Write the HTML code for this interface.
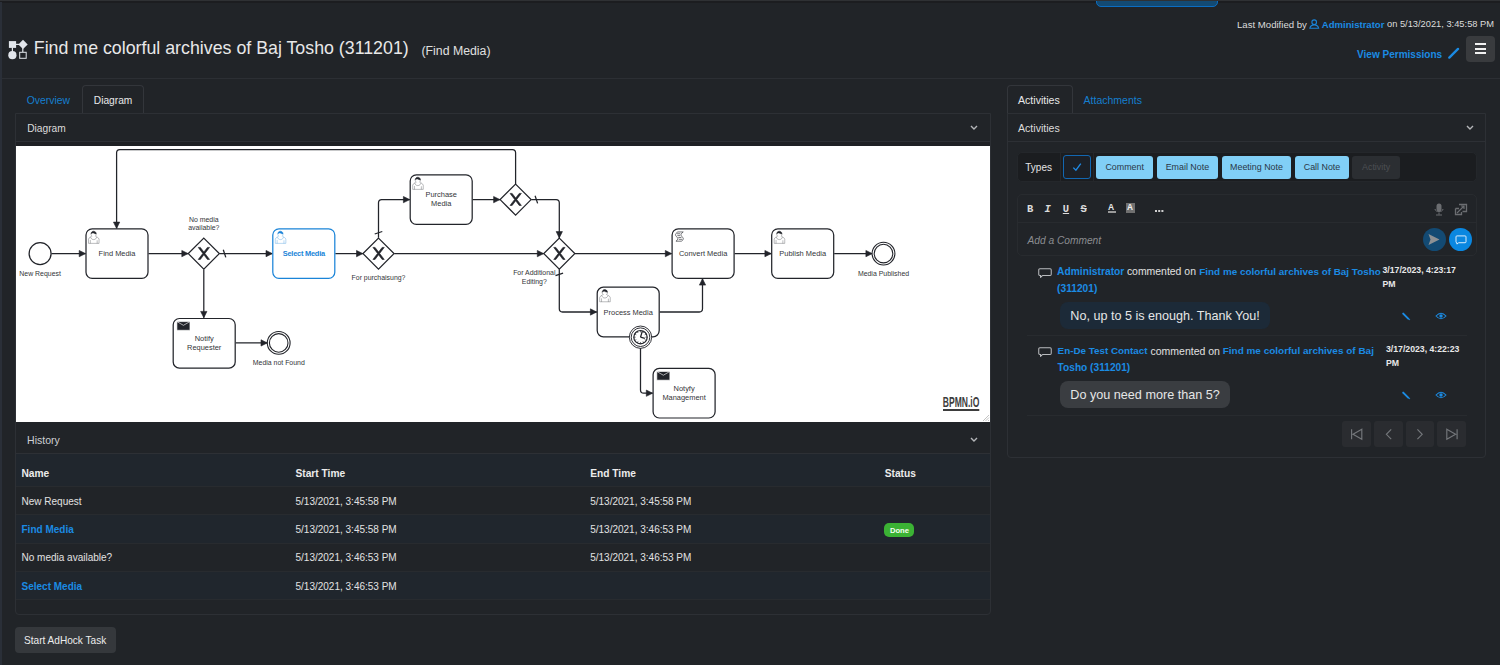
<!DOCTYPE html>
<html><head><meta charset="utf-8">
<style>
*{box-sizing:border-box;margin:0;padding:0}
html,body{width:1500px;height:665px;overflow:hidden;background:#212428;font-family:"Liberation Sans",sans-serif;color:#e4e4e4}
.a{position:absolute;white-space:nowrap;line-height:1}
.a.lnk{color:#1b8be3}
#topline{left:0;top:0;width:1500px;height:1px;background:#2f3134}
#topline2{left:0;top:1px;width:1500px;height:1.5px;background:#1c1d20}
#leftline{left:0;top:2px;width:2px;height:663px;background:#2a2f38}
#topbtn{left:1095.8px;top:-4px;width:122.4px;height:11px;background:#134a73;border:1px solid #0b6dc2;border-radius:0 0 5px 5px}
#hsep{left:2px;top:78px;width:1498px;height:1px;background:#2c2f34}
.tab{top:85px;height:29px;border:1px solid #33363b;border-bottom:none;border-radius:4px 4px 0 0}
.panel{border:1px solid #2d3035;border-radius:0 0 4px 4px}
.phead{font-size:11px;color:#dcdcdc}
.th{font-size:10.2px;font-weight:bold;color:#ececec}
.td{font-size:10px;color:#e2e2e2}
.tb{top:156px;height:22.5px;background:#81cff6;border-radius:3px;color:#2a3746;font-size:8.9px;text-align:center}
.tb span{position:relative;top:6.8px}
.pg{top:421px;width:28.7px;height:25.8px;background:#2a2c30;border-radius:3px}

</style></head><body>
<div class="a" id="topline2"></div>
<div class="a" id="topbtn"></div>
<div class="a" id="topline"></div>
<div class="a" id="leftline"></div>

<!-- title icon -->
<svg class="a" style="left:0;top:30px" width="40" height="40" viewBox="0 30 40 40">
 <g fill="#e2e6ec" stroke="#e2e6ec">
  <rect x="8.9" y="41.1" width="7.2" height="6.8" stroke="none"/>
  <path d="M23 39.7 L27.7 44.4 L23 49.1 L18.3 44.4Z" stroke="none"/>
  <line x1="16" y1="44.4" x2="19" y2="44.4" stroke-width="1.2"/>
  <line x1="12.4" y1="47.5" x2="12.4" y2="52" stroke-width="1.2"/>
  <circle cx="12.4" cy="55.2" r="4.1" stroke="none"/>
  <line x1="22.8" y1="48" x2="22.8" y2="52" stroke-width="1.2"/>
  <rect x="19.7" y="52.3" width="6.5" height="6" fill="none" stroke-width="1"/>
 </g>
</svg>
<div class="a" style="left:33.8px;top:40.3px;font-size:17.8px;color:#e8e8e8">Find me colorful archives of Baj Tosho (311201)</div>
<div class="a" style="left:421.5px;top:44.6px;font-size:12.3px;color:#e0e0e0">(Find Media)</div>

<!-- right header -->
<div class="a" style="left:1237px;top:19.7px;font-size:9.6px;color:#dcdcdc">Last Modified by</div>
<svg class="a" style="left:1309px;top:18.5px" width="11" height="11" viewBox="0 0 11 11"><circle cx="5.2" cy="3.2" r="2.3" fill="none" stroke="#1b84d8" stroke-width="1.1"/><path d="M0.9 9.2 C1.4 6.8 3 5.9 5.2 5.9 C7.4 5.9 9 6.8 9.6 9.2Z" fill="none" stroke="#1b84d8" stroke-width="1.1"/></svg>
<div class="a lnk" style="left:1321.8px;top:19.7px;font-size:9.55px;font-weight:bold">Administrator</div>
<div class="a" style="left:1387px;top:19.7px;font-size:9.3px;color:#dcdcdc">on 5/13/2021, 3:45:58 PM</div>
<div class="a lnk" style="left:1357px;top:50.4px;font-size:10.04px;font-weight:bold">View Permissions</div>
<svg class="a" style="left:1447px;top:47px" width="13" height="12" viewBox="0 0 13 12"><path d="M2.3 10.6 L11 1.9" stroke="#1b8be3" stroke-width="2.3" stroke-linecap="round"/></svg>
<div class="a" style="left:1466px;top:36px;width:29px;height:26px;background:#393b3e;border-radius:4px"></div>
<div class="a" style="left:1474.5px;top:43.4px;width:11.5px;height:2.1px;background:#f2f2f2"></div>
<div class="a" style="left:1474.5px;top:47.7px;width:11.5px;height:2.1px;background:#f2f2f2"></div>
<div class="a" style="left:1474.5px;top:52px;width:11.5px;height:2.1px;background:#f2f2f2"></div>

<div class="a" id="hsep"></div>

<!-- LEFT COLUMN -->
<div class="a lnk" style="left:26.7px;top:95.8px;font-size:10.4px;color:#157fcf">Overview</div>
<div class="a tab" style="left:82px;width:62px"></div>
<div class="a" style="left:93.8px;top:95.5px;font-size:10.2px;color:#e8e8e8">Diagram</div>

<div class="a panel" style="left:15px;top:113px;width:976px;height:502px"></div>
<div class="a phead" style="left:27.2px;top:124.2px;font-size:10.2px">Diagram</div>
<svg class="a" style="left:969.8px;top:125px" width="8" height="6" viewBox="0 0 8 6"><path d="M1 1 L4 4 L7 1" fill="none" stroke="#b4b6b9" stroke-width="1.4"/></svg>
<div class="a" style="left:16px;top:141px;width:974px;height:1px;background:#2d3035"></div>
<div class="a" style="left:16px;top:142px;width:974px;height:4px;background:#1e2024"></div>
<div class="a" id="diagram" style="left:16px;top:146px;width:974px;height:276px;background:#fff"></div>
<svg class="a" id="bpmn" style="left:16px;top:146px" width="974" height="276" viewBox="16 146 974 276" font-family="Liberation Sans, sans-serif"><path d="M51.4,253.6 L85.5,253.6" fill="none" stroke="#22242a" stroke-width="1.26"/>
<polygon points="85.5,253.6 79.2,250.45 79.2,256.75" fill="#22242a" stroke="#22242a" stroke-width="0.6" stroke-linejoin="round"/>
<path d="M148.5,253.6 L188.1,253.6" fill="none" stroke="#22242a" stroke-width="1.26"/>
<polygon points="188.1,253.6 181.79999999999998,250.45 181.79999999999998,256.75" fill="#22242a" stroke="#22242a" stroke-width="0.6" stroke-linejoin="round"/>
<path d="M219.5,253.6 L272.3,253.6" fill="none" stroke="#22242a" stroke-width="1.26"/>
<polygon points="272.3,253.6 266.0,250.45 266.0,256.75" fill="#22242a" stroke="#22242a" stroke-width="0.6" stroke-linejoin="round"/>
<line x1="223.28" y1="249.82" x2="225.80" y2="257.38" stroke="#22242a" stroke-width="1.26"/>
<path d="M203.8,269.4 L203.8,317.7" fill="none" stroke="#22242a" stroke-width="1.26"/>
<polygon points="203.8,317.7 200.65,311.4 206.95000000000002,311.4" fill="#22242a" stroke="#22242a" stroke-width="0.6" stroke-linejoin="round"/>
<path d="M235.7,342.9 L267.3,342.9" fill="none" stroke="#22242a" stroke-width="1.26"/>
<polygon points="267.3,342.9 261.0,339.75 261.0,346.04999999999995" fill="#22242a" stroke="#22242a" stroke-width="0.6" stroke-linejoin="round"/>
<path d="M335.3,253.6 L362.8,253.6" fill="none" stroke="#22242a" stroke-width="1.26"/>
<polygon points="362.8,253.6 356.5,250.45 356.5,256.75" fill="#22242a" stroke="#22242a" stroke-width="0.6" stroke-linejoin="round"/>
<path d="M378.5,237.8 L378.50,202.80 Q378.5,199.6 381.70,199.60 L409.7,199.6" fill="none" stroke="#22242a" stroke-width="1.26"/>
<polygon points="409.7,199.6 403.4,196.45 403.4,202.75" fill="#22242a" stroke="#22242a" stroke-width="0.6" stroke-linejoin="round"/>
<line x1="374.72" y1="234.02" x2="382.28" y2="231.50" stroke="#22242a" stroke-width="1.26"/>
<path d="M472.7,199.6 L499.9,199.6" fill="none" stroke="#22242a" stroke-width="1.26"/>
<polygon points="499.9,199.6 493.59999999999997,196.45 493.59999999999997,202.75" fill="#22242a" stroke="#22242a" stroke-width="0.6" stroke-linejoin="round"/>
<path d="M515.6,183.9 L515.60,152.80 Q515.6,149.6 512.40,149.60 L119.80,149.60 Q116.6,149.6 116.60,152.80 L116.6,228.4" fill="none" stroke="#22242a" stroke-width="1.26"/>
<polygon points="116.6,228.4 113.44999999999999,222.1 119.75,222.1" fill="#22242a" stroke="#22242a" stroke-width="0.6" stroke-linejoin="round"/>
<path d="M531.3,199.6 L556.10,199.60 Q559.3,199.6 559.30,202.80 L559.3,237.9" fill="none" stroke="#22242a" stroke-width="1.26"/>
<polygon points="559.3,237.9 556.15,231.6 562.4499999999999,231.6" fill="#22242a" stroke="#22242a" stroke-width="0.6" stroke-linejoin="round"/>
<line x1="535.08" y1="195.82" x2="537.60" y2="203.38" stroke="#22242a" stroke-width="1.26"/>
<path d="M394.2,253.6 L543.6,253.6" fill="none" stroke="#22242a" stroke-width="1.26"/>
<polygon points="543.6,253.6 537.3000000000001,250.45 537.3000000000001,256.75" fill="#22242a" stroke="#22242a" stroke-width="0.6" stroke-linejoin="round"/>
<path d="M575,253.6 L671.6,253.6" fill="none" stroke="#22242a" stroke-width="1.26"/>
<polygon points="671.6,253.6 665.3000000000001,250.45 665.3000000000001,256.75" fill="#22242a" stroke="#22242a" stroke-width="0.6" stroke-linejoin="round"/>
<path d="M559.3,269.3 L559.30,308.80 Q559.3,312 562.50,312.00 L596.7,312" fill="none" stroke="#22242a" stroke-width="1.26"/>
<polygon points="596.7,312 590.4000000000001,308.85 590.4000000000001,315.15" fill="#22242a" stroke="#22242a" stroke-width="0.6" stroke-linejoin="round"/>
<line x1="563.08" y1="273.08" x2="555.52" y2="275.60" stroke="#22242a" stroke-width="1.26"/>
<path d="M659.7,312 L699.30,312.00 Q702.5,312 702.50,308.80 L702.5,278.8" fill="none" stroke="#22242a" stroke-width="1.26"/>
<polygon points="702.5,278.8 699.35,285.1 705.65,285.1" fill="#22242a" stroke="#22242a" stroke-width="0.6" stroke-linejoin="round"/>
<path d="M640.5,348.1 L640.50,390.00 Q640.5,393.2 643.70,393.20 L652.6,393.2" fill="none" stroke="#22242a" stroke-width="1.26"/>
<polygon points="652.6,393.2 646.3000000000001,390.05 646.3000000000001,396.34999999999997" fill="#22242a" stroke="#22242a" stroke-width="0.6" stroke-linejoin="round"/>
<path d="M734.6,253.6 L771.2,253.6" fill="none" stroke="#22242a" stroke-width="1.26"/>
<polygon points="771.2,253.6 764.9000000000001,250.45 764.9000000000001,256.75" fill="#22242a" stroke="#22242a" stroke-width="0.6" stroke-linejoin="round"/>
<path d="M834.2,253.6 L872.2,253.6" fill="none" stroke="#22242a" stroke-width="1.26"/>
<polygon points="872.2,253.6 865.9000000000001,250.45 865.9000000000001,256.75" fill="#22242a" stroke="#22242a" stroke-width="0.6" stroke-linejoin="round"/>
<circle cx="40.1" cy="253.6" r="10.96" fill="#fff" stroke="#22242a" stroke-width="1.3"/>
<g transform="translate(86.00,228.80) scale(0.62)"><rect x="0" y="0" width="100" height="80" rx="10" ry="10" fill="#fff" stroke="#22242a" stroke-width="2"/><path d="m 15,12 c 0.909,-0.845 1.594,-2.049 1.594,-3.385 0,-2.554 -1.805,-4.62199999 -4.357,-4.62199999 -2.55199998,0 -4.28799998,2.06799999 -4.28799998,4.62199999 0,1.348 0.974,2.562 1.89599999,3.405 -0.52899998,0.187 -5.669,2.097 -5.794,4.7560005 v 6.718 h 17 v -6.718 c 0,-2.2980005 -5.5279996,-4.5950005 -6.0169996,-4.7760005 z m -8,6 l 0,5.5 m 11,0 l 0,-5" fill="#fff" stroke="#22242a" stroke-width="0.5"/><path d="m 15,12 m 2.162,1.009 c 0,2.4470005 -2.158,4.4310005 -4.821,4.4310005 -2.66499998,0 -4.822,-1.981 -4.822,-4.4310005" fill="#fff" stroke="#22242a" stroke-width="0.5"/><path d="m 15,12 m -6.9,-3.80 c 0,0 2.25099998,-2.358 4.27399998,-1.177 2.024,1.181 4.221,1.537 4.124,0.965 -0.098,-0.57 -0.117,-3.79099999 -4.191,-4.13599999 -3.57499998,0.001 -4.20799998,3.36699999 -4.20699998,4.34799999 z" fill="#22242a" stroke="#22242a" stroke-width="0.5"/><text x="50" y="40.0" dy="0.35em" text-anchor="middle" font-size="12" font-weight="normal" fill="#333539">Find Media</text></g>
<g transform="translate(188.30,238.10) scale(0.62)"><polygon points="25,0 50,25 25,50 0,25" fill="#fff" stroke="#22242a" stroke-width="2"/><path d="M16,15 l7.43,9.71 l-7.43,9.71 l3.43,0 l5.71,-7.464 l5.71,7.464 l3.43,0 l-7.43,-9.71 l7.43,-9.71 l-3.43,0 l-5.71,7.464 l-5.71,-7.464 z" fill="#22242a" stroke="#22242a" stroke-width="1"/></g>
<g transform="translate(272.80,228.80) scale(0.62)"><rect x="0" y="0" width="100" height="80" rx="10" ry="10" fill="#fff" stroke="#1a84d8" stroke-width="2"/><path d="m 15,12 c 0.909,-0.845 1.594,-2.049 1.594,-3.385 0,-2.554 -1.805,-4.62199999 -4.357,-4.62199999 -2.55199998,0 -4.28799998,2.06799999 -4.28799998,4.62199999 0,1.348 0.974,2.562 1.89599999,3.405 -0.52899998,0.187 -5.669,2.097 -5.794,4.7560005 v 6.718 h 17 v -6.718 c 0,-2.2980005 -5.5279996,-4.5950005 -6.0169996,-4.7760005 z m -8,6 l 0,5.5 m 11,0 l 0,-5" fill="#fff" stroke="#1a84d8" stroke-width="0.5"/><path d="m 15,12 m 2.162,1.009 c 0,2.4470005 -2.158,4.4310005 -4.821,4.4310005 -2.66499998,0 -4.822,-1.981 -4.822,-4.4310005" fill="#fff" stroke="#1a84d8" stroke-width="0.5"/><path d="m 15,12 m -6.9,-3.80 c 0,0 2.25099998,-2.358 4.27399998,-1.177 2.024,1.181 4.221,1.537 4.124,0.965 -0.098,-0.57 -0.117,-3.79099999 -4.191,-4.13599999 -3.57499998,0.001 -4.20799998,3.36699999 -4.20699998,4.34799999 z" fill="#1a84d8" stroke="#1a84d8" stroke-width="0.5"/><text x="50" y="40.0" dy="0.35em" text-anchor="middle" font-size="12" font-weight="bold" fill="#1a84d8" letter-spacing="-0.4">Select Media</text></g>
<g transform="translate(173.20,318.50) scale(0.62)"><rect x="0" y="0" width="100" height="80" rx="10" ry="10" fill="#fff" stroke="#22242a" stroke-width="2"/><path d="M 6,5 l 0,14 l 21,0 l 0,-14 z" fill="#22242a" stroke="#fff" stroke-width="1"/><path d="M 6,5 l 10.5,6 l 10.5,-6" fill="none" stroke="#fff" stroke-width="1"/><text x="50" y="31.75" dy="0.35em" text-anchor="middle" font-size="12" font-weight="normal" fill="#333539">Notify</text><text x="50" y="46.25" dy="0.35em" text-anchor="middle" font-size="12" font-weight="normal" fill="#333539">Requester</text></g>
<circle cx="278.7" cy="342.9" r="11.4" fill="#fff" stroke="#22242a" stroke-width="1.1"/>
<circle cx="278.7" cy="342.9" r="9.3" fill="none" stroke="#22242a" stroke-width="1.1"/>
<g transform="translate(363.00,238.10) scale(0.62)"><polygon points="25,0 50,25 25,50 0,25" fill="#fff" stroke="#22242a" stroke-width="2"/><path d="M16,15 l7.43,9.71 l-7.43,9.71 l3.43,0 l5.71,-7.464 l5.71,7.464 l3.43,0 l-7.43,-9.71 l7.43,-9.71 l-3.43,0 l-5.71,7.464 l-5.71,-7.464 z" fill="#22242a" stroke="#22242a" stroke-width="1"/></g>
<g transform="translate(410.20,174.80) scale(0.62)"><rect x="0" y="0" width="100" height="80" rx="10" ry="10" fill="#fff" stroke="#22242a" stroke-width="2"/><path d="m 15,12 c 0.909,-0.845 1.594,-2.049 1.594,-3.385 0,-2.554 -1.805,-4.62199999 -4.357,-4.62199999 -2.55199998,0 -4.28799998,2.06799999 -4.28799998,4.62199999 0,1.348 0.974,2.562 1.89599999,3.405 -0.52899998,0.187 -5.669,2.097 -5.794,4.7560005 v 6.718 h 17 v -6.718 c 0,-2.2980005 -5.5279996,-4.5950005 -6.0169996,-4.7760005 z m -8,6 l 0,5.5 m 11,0 l 0,-5" fill="#fff" stroke="#22242a" stroke-width="0.5"/><path d="m 15,12 m 2.162,1.009 c 0,2.4470005 -2.158,4.4310005 -4.821,4.4310005 -2.66499998,0 -4.822,-1.981 -4.822,-4.4310005" fill="#fff" stroke="#22242a" stroke-width="0.5"/><path d="m 15,12 m -6.9,-3.80 c 0,0 2.25099998,-2.358 4.27399998,-1.177 2.024,1.181 4.221,1.537 4.124,0.965 -0.098,-0.57 -0.117,-3.79099999 -4.191,-4.13599999 -3.57499998,0.001 -4.20799998,3.36699999 -4.20699998,4.34799999 z" fill="#22242a" stroke="#22242a" stroke-width="0.5"/><text x="50" y="31.75" dy="0.35em" text-anchor="middle" font-size="12" font-weight="normal" fill="#333539">Purchase</text><text x="50" y="46.25" dy="0.35em" text-anchor="middle" font-size="12" font-weight="normal" fill="#333539">Media</text></g>
<g transform="translate(500.10,184.10) scale(0.62)"><polygon points="25,0 50,25 25,50 0,25" fill="#fff" stroke="#22242a" stroke-width="2"/><path d="M16,15 l7.43,9.71 l-7.43,9.71 l3.43,0 l5.71,-7.464 l5.71,7.464 l3.43,0 l-7.43,-9.71 l7.43,-9.71 l-3.43,0 l-5.71,7.464 l-5.71,-7.464 z" fill="#22242a" stroke="#22242a" stroke-width="1"/></g>
<g transform="translate(543.80,238.10) scale(0.62)"><polygon points="25,0 50,25 25,50 0,25" fill="#fff" stroke="#22242a" stroke-width="2"/><path d="M16,15 l7.43,9.71 l-7.43,9.71 l3.43,0 l5.71,-7.464 l5.71,7.464 l3.43,0 l-7.43,-9.71 l7.43,-9.71 l-3.43,0 l-5.71,7.464 l-5.71,-7.464 z" fill="#22242a" stroke="#22242a" stroke-width="1"/></g>
<g transform="translate(672.10,228.80) scale(0.62)"><rect x="0" y="0" width="100" height="80" rx="10" ry="10" fill="#fff" stroke="#22242a" stroke-width="2"/><path d="m 15,20 c 9.966553,-6.27276 -8.000926,-7.91932 2.968968,-14.938 l -8.802728,0 c -10.969894,7.01868 6.997585,8.66524 -2.968967,14.938 z m -7,-12 l 5,0 m -4.5,3 l 4.5,0 m -3,3 l 5,0 m -4,3 l 5,0" fill="#fff" stroke="#22242a" stroke-width="1"/><text x="50" y="40.0" dy="0.35em" text-anchor="middle" font-size="12" font-weight="normal" fill="#333539">Convert Media</text></g>
<g transform="translate(597.20,287.20) scale(0.62)"><rect x="0" y="0" width="100" height="80" rx="10" ry="10" fill="#fff" stroke="#22242a" stroke-width="2"/><path d="m 15,12 c 0.909,-0.845 1.594,-2.049 1.594,-3.385 0,-2.554 -1.805,-4.62199999 -4.357,-4.62199999 -2.55199998,0 -4.28799998,2.06799999 -4.28799998,4.62199999 0,1.348 0.974,2.562 1.89599999,3.405 -0.52899998,0.187 -5.669,2.097 -5.794,4.7560005 v 6.718 h 17 v -6.718 c 0,-2.2980005 -5.5279996,-4.5950005 -6.0169996,-4.7760005 z m -8,6 l 0,5.5 m 11,0 l 0,-5" fill="#fff" stroke="#22242a" stroke-width="0.5"/><path d="m 15,12 m 2.162,1.009 c 0,2.4470005 -2.158,4.4310005 -4.821,4.4310005 -2.66499998,0 -4.822,-1.981 -4.822,-4.4310005" fill="#fff" stroke="#22242a" stroke-width="0.5"/><path d="m 15,12 m -6.9,-3.80 c 0,0 2.25099998,-2.358 4.27399998,-1.177 2.024,1.181 4.221,1.537 4.124,0.965 -0.098,-0.57 -0.117,-3.79099999 -4.191,-4.13599999 -3.57499998,0.001 -4.20799998,3.36699999 -4.20699998,4.34799999 z" fill="#22242a" stroke="#22242a" stroke-width="0.5"/><text x="50" y="40.0" dy="0.35em" text-anchor="middle" font-size="12" font-weight="normal" fill="#333539">Process Media</text></g>
<g transform="translate(653.10,368.40) scale(0.62)"><rect x="0" y="0" width="100" height="80" rx="10" ry="10" fill="#fff" stroke="#22242a" stroke-width="2"/><path d="M 6,5 l 0,14 l 21,0 l 0,-14 z" fill="#22242a" stroke="#fff" stroke-width="1"/><path d="M 6,5 l 10.5,6 l 10.5,-6" fill="none" stroke="#fff" stroke-width="1"/><text x="50" y="31.75" dy="0.35em" text-anchor="middle" font-size="12" font-weight="normal" fill="#333539">Notyfy</text><text x="50" y="46.25" dy="0.35em" text-anchor="middle" font-size="12" font-weight="normal" fill="#333539">Management</text></g>
<g transform="translate(771.70,228.80) scale(0.62)"><rect x="0" y="0" width="100" height="80" rx="10" ry="10" fill="#fff" stroke="#22242a" stroke-width="2"/><path d="m 15,12 c 0.909,-0.845 1.594,-2.049 1.594,-3.385 0,-2.554 -1.805,-4.62199999 -4.357,-4.62199999 -2.55199998,0 -4.28799998,2.06799999 -4.28799998,4.62199999 0,1.348 0.974,2.562 1.89599999,3.405 -0.52899998,0.187 -5.669,2.097 -5.794,4.7560005 v 6.718 h 17 v -6.718 c 0,-2.2980005 -5.5279996,-4.5950005 -6.0169996,-4.7760005 z m -8,6 l 0,5.5 m 11,0 l 0,-5" fill="#fff" stroke="#22242a" stroke-width="0.5"/><path d="m 15,12 m 2.162,1.009 c 0,2.4470005 -2.158,4.4310005 -4.821,4.4310005 -2.66499998,0 -4.822,-1.981 -4.822,-4.4310005" fill="#fff" stroke="#22242a" stroke-width="0.5"/><path d="m 15,12 m -6.9,-3.80 c 0,0 2.25099998,-2.358 4.27399998,-1.177 2.024,1.181 4.221,1.537 4.124,0.965 -0.098,-0.57 -0.117,-3.79099999 -4.191,-4.13599999 -3.57499998,0.001 -4.20799998,3.36699999 -4.20699998,4.34799999 z" fill="#22242a" stroke="#22242a" stroke-width="0.5"/><text x="50" y="40.0" dy="0.35em" text-anchor="middle" font-size="12" font-weight="normal" fill="#333539">Publish Media</text></g>
<circle cx="883.5" cy="253.6" r="11.4" fill="#fff" stroke="#22242a" stroke-width="1.1"/>
<circle cx="883.5" cy="253.6" r="9.3" fill="none" stroke="#22242a" stroke-width="1.1"/>
<g transform="translate(629.34,326.04) scale(0.62)"><circle cx="18" cy="18" r="18" fill="#fff" stroke="#22242a" stroke-width="1.5"/><circle cx="18" cy="18" r="15" fill="#fff" stroke="#22242a" stroke-width="1.5"/><circle cx="18" cy="18" r="10.8" fill="#fff" stroke="#22242a" stroke-width="2"/><path d="M 18,18 m 0,-10.8 l 0,3" transform="rotate(0 18 18)" stroke="#22242a" stroke-width="1"/><path d="M 18,18 m 0,-10.8 l 0,3" transform="rotate(30 18 18)" stroke="#22242a" stroke-width="1"/><path d="M 18,18 m 0,-10.8 l 0,3" transform="rotate(60 18 18)" stroke="#22242a" stroke-width="1"/><path d="M 18,18 m 0,-10.8 l 0,3" transform="rotate(90 18 18)" stroke="#22242a" stroke-width="1"/><path d="M 18,18 m 0,-10.8 l 0,3" transform="rotate(120 18 18)" stroke="#22242a" stroke-width="1"/><path d="M 18,18 m 0,-10.8 l 0,3" transform="rotate(150 18 18)" stroke="#22242a" stroke-width="1"/><path d="M 18,18 m 0,-10.8 l 0,3" transform="rotate(180 18 18)" stroke="#22242a" stroke-width="1"/><path d="M 18,18 m 0,-10.8 l 0,3" transform="rotate(210 18 18)" stroke="#22242a" stroke-width="1"/><path d="M 18,18 m 0,-10.8 l 0,3" transform="rotate(240 18 18)" stroke="#22242a" stroke-width="1"/><path d="M 18,18 m 0,-10.8 l 0,3" transform="rotate(270 18 18)" stroke="#22242a" stroke-width="1"/><path d="M 18,18 m 0,-10.8 l 0,3" transform="rotate(300 18 18)" stroke="#22242a" stroke-width="1"/><path d="M 18,18 m 0,-10.8 l 0,3" transform="rotate(330 18 18)" stroke="#22242a" stroke-width="1"/><path d="M 18,18 l 3,-10 m -3,10 l 7,2" fill="none" stroke="#22242a" stroke-width="2"/></g>
<text x="40.1" y="273.40" dy="0.35em" text-anchor="middle" font-size="6.93" fill="#333539">New Request</text>
<text x="203.8" y="219.35" dy="0.35em" text-anchor="middle" font-size="6.93" fill="#333539">No media</text>
<text x="203.8" y="227.65" dy="0.35em" text-anchor="middle" font-size="6.93" fill="#333539">available?</text>
<text x="278.8" y="362.60" dy="0.35em" text-anchor="middle" font-size="6.93" fill="#333539">Media not Found</text>
<text x="378.5" y="277.60" dy="0.35em" text-anchor="middle" font-size="6.93" fill="#333539">For purchaisung?</text>
<text x="534.3" y="273.05" dy="0.35em" text-anchor="middle" font-size="6.93" fill="#333539">For Additional</text>
<text x="534.3" y="281.35" dy="0.35em" text-anchor="middle" font-size="6.93" fill="#333539">Editing?</text>
<text x="883.5" y="273.30" dy="0.35em" text-anchor="middle" font-size="6.93" fill="#333539">Media Published</text><text x="961.1" y="407.3" text-anchor="middle" font-size="14.6" font-weight="bold" fill="#3d3d3d" transform="translate(961.1 0) scale(0.586 1) translate(-961.1 0)">BPMN.iO</text><rect x="943" y="409" width="36.3" height="2" fill="#3d3d3d"/><path d="M983,421 L989,415 M985.5,421 L989,417.5 M988,421 L989,420" stroke="#999" stroke-width="0.6"/></svg>


<!-- HISTORY -->
<div class="a phead" style="left:27.1px;top:435px;font-size:10.5px;color:#cfd1d4">History</div>
<svg class="a" style="left:969.8px;top:437px" width="8" height="6" viewBox="0 0 8 6"><path d="M1 1 L4 4 L7 1" fill="none" stroke="#b4b6b9" stroke-width="1.4"/></svg>
<div class="a" style="left:16px;top:453px;width:974px;height:1px;background:#2d3035"></div>
<div class="a" style="left:16px;top:454px;width:974px;height:32px;background:#20262d"></div>
<div class="a" style="left:16px;top:486px;width:974px;height:1px;background:#282b2f"></div>
<div class="a" style="left:16px;top:514px;width:974px;height:1px;background:#282b2f"></div>
<div class="a" style="left:16px;top:515px;width:974px;height:28px;background:#20262d"></div>
<div class="a" style="left:16px;top:543px;width:974px;height:1px;background:#282b2f"></div>
<div class="a" style="left:16px;top:571px;width:974px;height:1px;background:#282b2f"></div>
<div class="a" style="left:16px;top:572px;width:974px;height:27px;background:#20262d"></div>
<div class="a" style="left:16px;top:599px;width:974px;height:1px;background:#282b2f"></div>
<div class="th a" style="left:21.5px;top:468.9px">Name</div>
<div class="th a" style="left:295.5px;top:468.9px">Start Time</div>
<div class="th a" style="left:590.2px;top:468.9px">End Time</div>
<div class="th a" style="left:884.7px;top:468.9px">Status</div>
<div class="td a" style="left:21.5px;top:497px">New Request</div>
<div class="td a" style="left:295.5px;top:497px">5/13/2021, 3:45:58 PM</div>
<div class="td a" style="left:590.2px;top:497px">5/13/2021, 3:45:58 PM</div>
<div class="td a lnk" style="left:21.5px;top:525px;font-weight:bold">Find Media</div>
<div class="td a" style="left:295.5px;top:525px">5/13/2021, 3:45:58 PM</div>
<div class="td a" style="left:590.2px;top:525px">5/13/2021, 3:46:53 PM</div>
<div class="a" style="left:884px;top:523px;width:30px;height:13.5px;background:#3bb234;border-radius:5px"></div>
<div class="a" style="left:890px;top:527.2px;font-size:7.6px;font-weight:bold;color:#f4fff2">Done</div>
<div class="td a" style="left:21.5px;top:553.3px">No media available?</div>
<div class="td a" style="left:295.5px;top:553.3px">5/13/2021, 3:46:53 PM</div>
<div class="td a" style="left:590.2px;top:553.3px">5/13/2021, 3:46:53 PM</div>
<div class="td a lnk" style="left:21.5px;top:581.5px;font-weight:bold">Select Media</div>
<div class="td a" style="left:295.5px;top:581.5px">5/13/2021, 3:46:53 PM</div>

<div class="a" style="left:15px;top:626.5px;width:101px;height:26px;background:#35383c;border-radius:4px"></div>
<div class="a" style="left:24px;top:636.3px;font-size:10.1px;color:#ececec">Start AdHock Task</div>

<!-- RIGHT COLUMN -->
<div class="a tab" style="left:1007px;width:66px"></div>
<div class="a" style="left:1018px;top:94.5px;font-size:10.6px;color:#e8e8e8">Activities</div>
<div class="a lnk" style="left:1083.6px;top:94.6px;font-size:10.5px;color:#157fcf">Attachments</div>
<div class="a panel" style="left:1007px;top:113px;width:479px;height:345px"></div>
<div class="a phead" style="left:1018px;top:123px;font-size:10.6px">Activities</div>
<svg class="a" style="left:1465.5px;top:125px" width="8" height="6" viewBox="0 0 8 6"><path d="M1 1 L4 4 L7 1" fill="none" stroke="#b4b6b9" stroke-width="1.4"/></svg>
<div class="a" style="left:1008px;top:141px;width:477px;height:1px;background:#2d3035"></div>

<!-- types -->
<div class="a" style="left:1017px;top:152px;width:460px;height:30px;background:#1b1d20;border:1px solid #24272b;border-radius:5px"></div>
<div class="a" style="left:1025.3px;top:162.7px;font-size:10px;color:#e4e4e4">Types</div>
<div class="a" style="left:1060px;top:152px;width:1px;height:30px;background:#25272b"></div>
<div class="a" style="left:1093px;top:152px;width:1px;height:30px;background:#25272b"></div>
<div class="a" style="left:1063px;top:155px;width:28px;height:24px;border:1px solid #1267b2;border-radius:3px;background:#1c2027"></div>
<svg class="a" style="left:1071px;top:161px" width="12" height="12" viewBox="0 0 12 12"><path d="M2.3 6.6 L4.9 9.2 L9.8 2.6" fill="none" stroke="#1f8ae6" stroke-width="1.3"/></svg>
<div class="tb a" style="left:1096.4px;width:56.5px"><span>Comment</span></div>
<div class="tb a" style="left:1157.2px;width:60.4px"><span>Email Note</span></div>
<div class="tb a" style="left:1221.8px;width:69.4px"><span>Meeting Note</span></div>
<div class="tb a" style="left:1295.4px;width:53.2px"><span>Call Note</span></div>
<div class="tb a" style="left:1352.4px;width:47.4px;background:#2b2e32;color:#4b4e53"><span>Activity</span></div>

<!-- editor -->
<div class="a" style="left:1017px;top:194px;width:460px;height:62px;border:1px solid #282b2f;border-radius:5px"></div>
<div class="a" style="left:1018px;top:222px;width:458px;height:1px;background:#282b2f"></div>
<div class="a" style="left:1027px;top:203.5px;font-family:'Liberation Mono',monospace;font-weight:bold;font-size:10.5px;color:#dcdcdc">B</div>
<div class="a" style="left:1044.5px;top:203.5px;font-family:'Liberation Mono',monospace;font-weight:bold;font-style:italic;font-size:10.5px;color:#dcdcdc">I</div>
<div class="a" style="left:1062.8px;top:203.5px;font-family:'Liberation Mono',monospace;font-weight:bold;font-size:10.5px;color:#dcdcdc;text-decoration:underline">U</div>
<div class="a" style="left:1080.5px;top:203.5px;font-family:'Liberation Mono',monospace;font-weight:bold;font-size:10.5px;color:#dcdcdc;text-decoration:line-through">S</div>
<div class="a" style="left:1108px;top:203px;font-weight:bold;font-size:8.5px;color:#e8e8e8">A</div>
<div class="a" style="left:1107.8px;top:211.3px;width:8.7px;height:1.3px;background:#9a9a9a"></div>
<div class="a" style="left:1125.6px;top:203.3px;width:9.2px;height:9.3px;background:#707070"></div>
<div class="a" style="left:1127px;top:204px;font-weight:bold;font-size:8.2px;color:#f4f4f4">A</div>
<div class="a" style="left:1155px;top:210.3px;width:1.6px;height:1.6px;background:#cfcfcf;box-shadow:3.2px 0 #cfcfcf,6.4px 0 #cfcfcf"></div>
<svg class="a" style="left:1433px;top:203px" width="12" height="13" viewBox="0 0 12 13"><rect x="3.5" y="0.5" width="5" height="8" rx="2.5" fill="#6b6d71"/><path d="M2 6 C2 9.5 10 9.5 10 6" fill="none" stroke="#6b6d71" stroke-width="1"/><path d="M6 9.5 V11.5 M3 12 H9" stroke="#6b6d71" stroke-width="1"/></svg>
<svg class="a" style="left:1454px;top:203px" width="14" height="13" viewBox="0 0 14 13"><path d="M5 1.5 H12.5 V8.5 H8.5" fill="none" stroke="#6b6d71" stroke-width="1.3"/><path d="M1.5 5.5 H5 M1.5 5.5 V11.5 H7.5 V9" fill="none" stroke="#6b6d71" stroke-width="1.3"/><path d="M3 10 L10 3 M7 3 H10 V6" fill="none" stroke="#6b6d71" stroke-width="1.2"/></svg>
<div class="a" style="left:1027.5px;top:236.3px;font-size:10.2px;font-style:italic;color:#8b8d91">Add a Comment</div>
<div class="a" style="left:1422.7px;top:228px;width:23.4px;height:23.4px;border-radius:50%;background:#134a73"></div>
<svg class="a" style="left:1427px;top:233px" width="14" height="13" viewBox="0 0 14 13"><path d="M1.5 1 L12.5 6.5 L1.5 12 L3.5 6.5Z" fill="#8e9194"/></svg>
<div class="a" style="left:1448.9px;top:228px;width:23.4px;height:23.4px;border-radius:50%;background:#0a87e0"></div>
<svg class="a" style="left:1454.7px;top:235px" width="12" height="10" viewBox="0 0 13 11"><path d="M2 1 H11 Q12 1 12 2 V7.5 Q12 8.5 11 8.5 H4 L2 10 V8.5 Q1 8.5 1 7.5 V2 Q1 1 2 1Z" fill="none" stroke="#eef6ff" stroke-width="1"/></svg>

<!-- comments -->
<svg class="a" style="left:1037.7px;top:267.6px" width="14" height="10.3" viewBox="0 0 15 11"><path d="M2 0.8 H13 Q14.2 0.8 14.2 2 V6.8 Q14.2 8 13 8 H5 L2.8 10 V8 H2 Q0.8 8 0.8 6.8 V2 Q0.8 0.8 2 0.8Z" fill="none" stroke="#b9bbbe" stroke-width="1.1"/></svg>
<div class="a lnk" style="left:1057.1px;top:266.5px;font-size:10.25px;font-weight:bold">Administrator</div>
<div class="a" style="left:1126.9px;top:267.35px;font-size:10.45px;color:#e0e0e0">commented on</div>
<div class="a lnk" style="left:1199.3px;top:266.8px;font-size:9.9px;font-weight:bold">Find me colorful archives of Baj Tosho</div>
<div class="a lnk" style="left:1057.1px;top:283.8px;font-size:10.2px;font-weight:bold">(311201)</div>
<div class="a" style="left:1382.5px;top:265.6px;font-size:8.7px;font-weight:bold;color:#e8e8e8">3/17/2023, 4:23:17</div>
<div class="a" style="left:1382.5px;top:279.6px;font-size:8.7px;font-weight:bold;color:#e8e8e8">PM</div>
<div class="a" style="left:1060px;top:301.5px;width:210px;height:27px;border-radius:8px;background:#1c2a38"></div>
<div class="a" style="left:1070.3px;top:309.8px;font-size:12.6px;color:#e6e6e6">No, up to 5 is enough. Thank You!</div>
<svg class="a" style="left:1401px;top:311px" width="10" height="10" viewBox="0 0 10 10"><path d="M2.2 2.6 L7.2 7.6" stroke="#1b8be3" stroke-width="2" stroke-linecap="round"/><path d="M7.6 7.2 L9 9 L7.2 7.8Z" fill="#1b8be3" stroke="#1b8be3" stroke-width="0.6"/></svg>
<svg class="a" style="left:1435px;top:312px" width="12" height="8" viewBox="0 0 12 8"><path d="M1 4 Q6 -1.6 11 4 Q6 9.6 1 4Z" fill="none" stroke="#1b8be3" stroke-width="1.1"/><circle cx="6" cy="4" r="1.7" fill="#1b8be3"/></svg>
<div class="a" style="left:1027px;top:335px;width:440px;height:1px;background:#282b2f"></div>

<svg class="a" style="left:1037.7px;top:346.9px" width="14" height="10.3" viewBox="0 0 15 11"><path d="M2 0.8 H13 Q14.2 0.8 14.2 2 V6.8 Q14.2 8 13 8 H5 L2.8 10 V8 H2 Q0.8 8 0.8 6.8 V2 Q0.8 0.8 2 0.8Z" fill="none" stroke="#b9bbbe" stroke-width="1.1"/></svg>
<div class="a lnk" style="left:1057.6px;top:346.1px;font-size:9.84px;font-weight:bold">En-De Test Contact</div>
<div class="a" style="left:1150.5px;top:345.5px;font-size:10.5px;color:#e0e0e0">commented on</div>
<div class="a lnk" style="left:1222.7px;top:345.9px;font-size:9.97px;font-weight:bold">Find me colorful archives of Baj</div>
<div class="a lnk" style="left:1057.6px;top:363.1px;font-size:10.17px;font-weight:bold">Tosho (311201)</div>
<div class="a" style="left:1386px;top:345.1px;font-size:8.7px;font-weight:bold;color:#e8e8e8">3/17/2023, 4:22:23</div>
<div class="a" style="left:1386px;top:359.1px;font-size:8.7px;font-weight:bold;color:#e8e8e8">PM</div>
<div class="a" style="left:1060px;top:380.7px;width:170px;height:27px;border-radius:8px;background:#3a3d41"></div>
<div class="a" style="left:1070.3px;top:389.3px;font-size:12.64px;color:#e6e6e6">Do you need more than 5?</div>
<svg class="a" style="left:1401px;top:390.3px" width="10" height="10" viewBox="0 0 10 10"><path d="M2.2 2.6 L7.2 7.6" stroke="#1b8be3" stroke-width="2" stroke-linecap="round"/><path d="M7.6 7.2 L9 9 L7.2 7.8Z" fill="#1b8be3" stroke="#1b8be3" stroke-width="0.6"/></svg>
<svg class="a" style="left:1435px;top:391.3px" width="12" height="8" viewBox="0 0 12 8"><path d="M1 4 Q6 -1.6 11 4 Q6 9.6 1 4Z" fill="none" stroke="#1b8be3" stroke-width="1.1"/><circle cx="6" cy="4" r="1.7" fill="#1b8be3"/></svg>
<div class="a" style="left:1027px;top:415px;width:440px;height:1px;background:#282b2f"></div>

<div class="pg a" style="left:1342.3px"></div>
<div class="pg a" style="left:1374px"></div>
<div class="pg a" style="left:1405.7px"></div>
<div class="pg a" style="left:1437.3px"></div>
<svg class="a" style="left:1342.3px;top:421px" width="125" height="26" viewBox="0 0 125 26"><g fill="none" stroke="#74777b" stroke-width="1.15"><path d="M9.6 8.3 V18.3 M19.8 8.3 L11 13.3 L19.8 18.3Z"/><path d="M49.2 8.4 L44.4 13.3 L49.2 18.2"/><path d="M75.4 8.4 L80.2 13.3 L75.4 18.2"/><path d="M104.8 8.3 L113.6 13.3 L104.8 18.3Z M115.1 8.3 V18.3"/></g></svg>


</body></html>
